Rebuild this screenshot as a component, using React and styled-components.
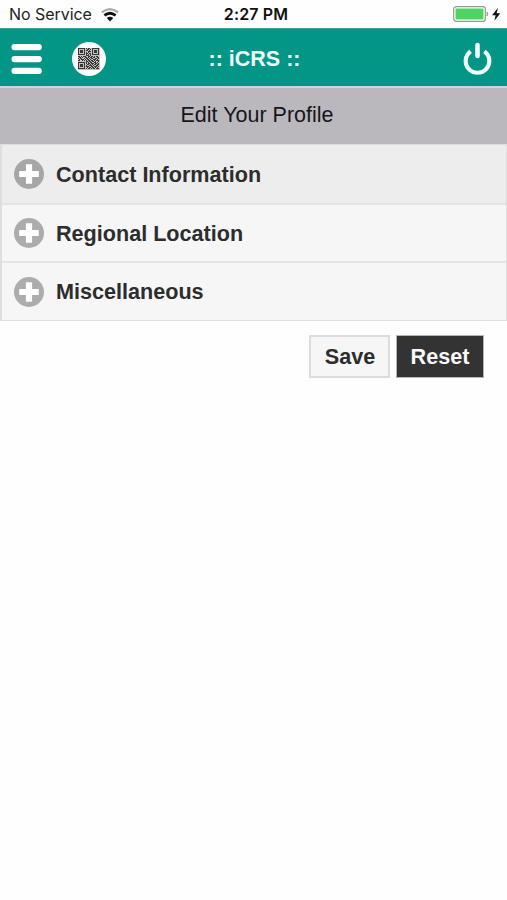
import React from "react";
import styled, { createGlobalStyle } from "styled-components";

const GlobalStyle = createGlobalStyle`
  * { box-sizing: border-box; }
  body {
    margin: 0;
    background: #fff;
    font-family: "Liberation Sans", Arial, sans-serif;
  }
  svg { display: block; flex: none; }
`;

const Screen = styled.div`
  width: 100%;
  min-height: 900px;
  background: #fefefe;
`;

const Columns = styled.div`
  display: grid;
  grid-template-columns: 1fr auto 1fr;
  align-items: center;
`;

const StatusBar = styled(Columns)`
  height: 28px;
  padding: 0 6px 0 9px;
  font-family: Inter, sans-serif;
  color: #222;
`;

const Side = styled.div`
  display: flex;
  align-items: center;
  justify-content: ${(p) => (p.$end ? "flex-end" : "flex-start")};
  gap: ${(p) => p.$gap || 0}px;
`;

const Carrier = styled.span`
  font-size: 16px;
  letter-spacing: -0.05px;
  line-height: 28px;
  white-space: nowrap;
`;

const Clock = styled.span`
  padding-left: 2px;
  font-size: 16px;
  font-weight: 600;
  line-height: 28px;
  letter-spacing: 0.15px;
  color: #111;
`;

const Header = styled(Columns)`
  height: 60px;
  padding: 2px 14px 0 11px;
  background: #039687;
  border-top: 1px solid #3ba597;
  border-bottom: 2px solid #cbd5d7;
`;

const HeaderTitle = styled.h1`
  margin: 0;
  padding-left: 5px;
  font-size: 21.5px;
  line-height: 28px;
  color: #effffb;
  white-space: pre;
`;

const IconButton = styled.button`
  display: block;
  padding: 0;
  border: 0;
  background: none;
`;

const PageTitle = styled.h2`
  height: 56px;
  margin: 0;
  font-size: 21.5px;
  font-weight: 400;
  line-height: 54px;
  text-align: center;
  padding-left: 7px;
  color: #17151a;
  background: #bbb8bd;
`;

const SectionList = styled.div`
  border: solid #dedede;
  border-width: 1px 1px 1px 2px;
`;

const Section = styled.button`
  display: flex;
  align-items: center;
  gap: 12px;
  width: 100%;
  height: ${(p) => p.$height}px;
  padding: 0 0 0 12px;
  border: 0;
  border-top: ${(p) => (p.$active ? 0 : 2)}px solid #e4e4e4;
  background: ${(p) => (p.$active ? "#ededed" : "#f6f6f6")};
  color: #2d2d2d;
  font: bold 21.6px/28px "Liberation Sans", Arial, sans-serif;
  text-align: left;
`;

const SectionLabel = styled.span`
  padding-top: ${(p) => p.$drop || 0}px;
`;

const Actions = styled.div`
  display: flex;
  justify-content: flex-end;
  gap: 6px;
  padding: 14px 23px 0 0;
`;

const ActionButton = styled.button`
  width: ${(p) => (p.$dark ? 88 : 81)}px;
  height: 43px;
  padding: ${(p) => (p.$dark ? 0 : "0 0 0 1px")};
  border: ${(p) => (p.$dark ? "1px solid #b5b5b5" : "2px solid #dcdcdc")};
  background: ${(p) => (p.$dark ? "#333" : "#f6f6f6")};
  color: ${(p) => (p.$dark ? "#fafafa" : "#2d2d2d")};
  font: bold 21.6px/28px "Liberation Sans", Arial, sans-serif;
`;

function WifiIcon() {
  return (
    <svg width="18" height="15" viewBox="0 -1 18 15" fill="none">
      <path d="M0.8 4.4Q9-2.2 17.2 4.4" stroke="#aaa" strokeWidth="2" />
      <path d="M3.4 7.4Q9 3 14.6 7.4" stroke="#111" strokeWidth="2.8" />
      <path d="M5.8 10.1Q9 7.4 12.2 10.1L9 13.6Z" fill="#111" />
    </svg>
  );
}

function BatteryIcon() {
  return (
    <svg width="48" height="18" viewBox="0 0 48 18">
      <rect x="0.7" y="1.7" width="31.6" height="14.6" rx="2.6" fill="#fff" stroke="#969696" strokeWidth="1.2" />
      <rect x="2.5" y="3.5" width="28" height="11" rx="1" fill="#4cd562" />
      <path d="M34 7q1.6 2 0 4Z" fill="#888" stroke="#999" strokeWidth="0.8" />
      <path d="M45 2.8 39 10.2H42.6L41.4 15.8 47.4 8.2H43.6Z" fill="#111" />
    </svg>
  );
}

function MenuIcon() {
  return (
    <svg width="31" height="32" viewBox="0 0 31 32" fill="#fff">
      <rect x="0.5" y="1" width="30.3" height="6.3" rx="3" />
      <rect x="0.5" y="12.9" width="30.3" height="6.3" rx="3" />
      <rect x="0.5" y="24.8" width="30.3" height="6.3" rx="3" />
    </svg>
  );
}

const QR_ROWS = [
  "111111101011001111111",
  "100000100110101000001",
  "101110101101001011101",
  "101110100011101011101",
  "101110101010001011101",
  "100000101101101000001",
  "111111101010101111111",
  "000000001110100000000",
  "110101110011011010110",
  "011010011010110110011",
  "101100101101011001101",
  "010111010110100111010",
  "110010101011011010111",
  "000000001101101101001",
  "111111101010110011010",
  "100000101011011101101",
  "101110100110101011011",
  "101110101001110100110",
  "101110101110011011101",
  "100000100101101101010",
  "111111101011010110111",
];

function QrIcon() {
  return (
    <svg width="34" height="34" viewBox="0 0 34 34">
      <circle cx="17" cy="17" r="17" fill="#fff" />
      <rect x="6" y="6" width="22" height="22" fill="#c6c1c1" />
      <g transform="translate(6 6)" fill="#383536" shapeRendering="crispEdges">
        {QR_ROWS.flatMap((row, y) =>
          [...row].map((cell, x) =>
            cell === "1" ? <rect key={`${x}-${y}`} x={x} y={y} width="1" height="1" /> : null
          )
        )}
      </g>
    </svg>
  );
}

function PowerIcon() {
  return (
    <svg width="30" height="34" viewBox="0 0 30 34" fill="none" stroke="#effffb" strokeLinecap="round">
      <path d="M7.6 9.4A11.8 11.8 0 1 0 21.4 9.4" strokeWidth="4.2" strokeLinecap="butt" />
      <path d="M14.5 3V14" strokeWidth="4.6" />
    </svg>
  );
}

function PlusIcon({ color }) {
  return (
    <svg width="30" height="30" viewBox="0 0 30 30">
      <circle cx="15" cy="15" r="15" fill={color} />
      <path d="M15 5.2V24.8M5.2 15H24.8" stroke="#fff" strokeWidth="6.2" />
    </svg>
  );
}

const SECTIONS = [
  { label: "Contact Information", height: 58, active: true, drop: 2 },
  { label: "Regional Location", height: 58, drop: 2 },
  { label: "Miscellaneous", height: 59 },
];

export default function App() {
  return (
    <Screen>
      <GlobalStyle />
      <StatusBar>
        <Side $gap={9}>
          <Carrier>No Service</Carrier>
          <WifiIcon />
        </Side>
        <Clock>2:27 PM</Clock>
        <Side $end>
          <BatteryIcon />
        </Side>
      </StatusBar>
      <Header>
        <Side $gap={30}>
          <IconButton aria-label="Menu"><MenuIcon /></IconButton>
          <IconButton aria-label="QR code"><QrIcon /></IconButton>
        </Side>
        <HeaderTitle>:: iCRS ::</HeaderTitle>
        <Side $end>
          <IconButton aria-label="Log out"><PowerIcon /></IconButton>
        </Side>
      </Header>
      <PageTitle>Edit Your Profile</PageTitle>
      <SectionList>
        {SECTIONS.map(({ label, height, active, drop }) => (
          <Section key={label} $height={height} $active={active}>
            <PlusIcon color={active ? "#a6a6a6" : "#acacac"} />
            <SectionLabel $drop={drop}>{label}</SectionLabel>
          </Section>
        ))}
      </SectionList>
      <Actions>
        <ActionButton>Save</ActionButton>
        <ActionButton $dark>Reset</ActionButton>
      </Actions>
    </Screen>
  );
}
